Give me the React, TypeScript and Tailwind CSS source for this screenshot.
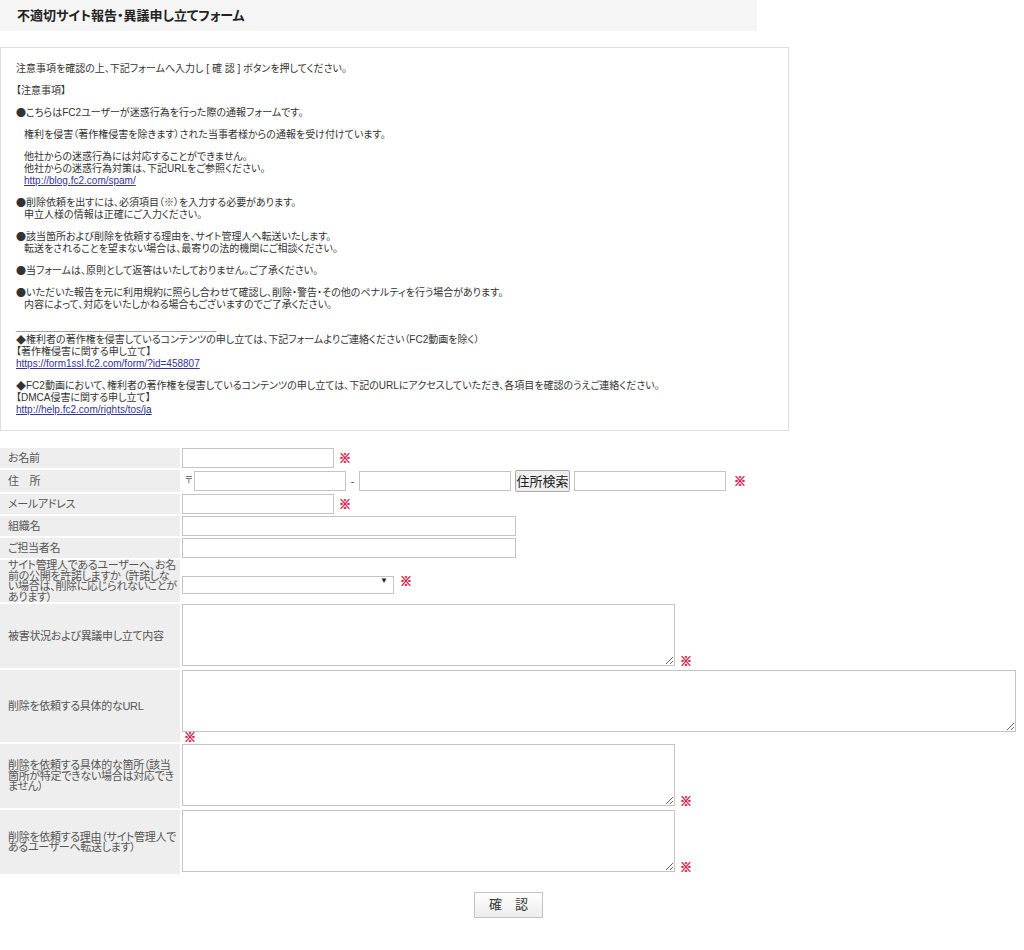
import React from 'react';

const font = "font-['Liberation_Sans','Noto_Sans_CJK_JP',sans-serif] [font-feature-settings:'palt']";
const field = 'h-[20px] border border-[#c4c4c4] bg-white px-1 text-[12px] outline-none';
const area = 'h-[62px] border border-[#c4c4c4] bg-white p-1 text-[12px] outline-none';

function Req({ className = '' }: { className?: string }) {
  return (
    <span
      className={`font-['Noto_Sans_CJK_JP'] text-[12px] font-bold leading-[10px] text-[#d9214f] [-webkit-text-stroke:0.6px_#d9214f] ${className}`}
    >
      ※
    </span>
  );
}

// bullet glyphs come from the CJK face so they keep full width
function Dot({ children = '●' }: { children?: string }) {
  return <span className="inline-block h-[12px] align-top font-['Noto_Sans_CJK_JP'] leading-[12px]">{children}</span>;
}

function Ext({ children }: { children: React.ReactNode }) {
  return (
    <a href="#" className="text-[#33339a] underline">
      {children}
    </a>
  );
}

function Label({ children }: { children: React.ReactNode }) {
  return (
    <div className="flex items-center bg-[#eeeeee] pl-[8px] pr-[1px] text-[11px] leading-[10.5px] tracking-[-0.3px] text-[#555]">
      {children}
    </div>
  );
}

function Notice() {
  return (
    <div className="mt-[16px] w-[789px] space-y-[10px] border border-[#dddddd] px-[15px] pb-[14px] pt-[15px] text-[10px] leading-[12px] text-[#333]">
      <p>注意事項を確認の上、下記フォームへ入力し [ 確 認 ] ボタンを押してください。</p>
      <p>【注意事項】</p>
      <p>
        <Dot />こちらはFC2ユーザーが迷惑行為を行った際の通報フォームです。
      </p>
      <p className="pl-[8px]">権利を侵害（著作権侵害を除きます）された当事者様からの通報を受け付けています。</p>
      <div className="pl-[8px]">
        <p>他社からの迷惑行為には対応することができません。</p>
        <p>他社からの迷惑行為対策は、下記URLをご参照ください。</p>
        <p>
          <Ext>http://blog.fc2.com/spam/</Ext>
        </p>
      </div>
      <div>
        <p>
          <Dot />削除依頼を出すには、必須項目（※）を入力する必要があります。
        </p>
        <p className="pl-[8px]">申立人様の情報は正確にご入力ください。</p>
      </div>
      <div>
        <p>
          <Dot />該当箇所および削除を依頼する理由を、サイト管理人へ転送いたします。
        </p>
        <p className="pl-[8px]">転送をされることを望まない場合は、最寄りの法的機関にご相談ください。</p>
      </div>
      <p>
        <Dot />当フォームは、原則として返答はいたしておりません。ご了承ください。
      </p>
      <div>
        <p>
          <Dot />いただいた報告を元に利用規約に照らし合わせて確認し、削除・警告・その他のペナルティを行う場合があります。
        </p>
        <p className="pl-[8px]">内容によって、対応をいたしかねる場合もございますのでご了承ください。</p>
      </div>
      <div>
        <p className="text-[#888]">____________________________________</p>
        <p className="mt-[1px]">
          <Dot>◆</Dot>権利者の著作権を侵害しているコンテンツの申し立ては、下記フォームよりご連絡ください（FC2動画を除く）
        </p>
        <p>【著作権侵害に関する申し立て】</p>
        <p>
          <Ext>https://form1ssl.fc2.com/form/?id=458807</Ext>
        </p>
      </div>
      <div>
        <p>
          <Dot>◆</Dot>FC2動画において、権利者の著作権を侵害しているコンテンツの申し立ては、下記のURLにアクセスしていただき、各項目を確認のうえご連絡ください。
        </p>
        <p>【DMCA侵害に関する申し立て】</p>
        <p>
          <Ext>http://help.fc2.com/rights/tos/</Ext>
          <a href="#" className="text-[#1d1d7a] underline">ja</a>
        </p>
      </div>
    </div>
  );
}

function ReportForm() {
  return (
    <form className="mt-[17px] w-[1017px]" onSubmit={(e) => e.preventDefault()}>
      <div className="grid grid-cols-[180px_835px] gap-[2px]">
        <Label>お名前</Label>
        <div className="flex items-center">
          <input className={`${field} w-[152px]`} />
          <Req className="ml-[5px]" />
        </div>

        <Label>住　所</Label>
        <div className="flex items-center">
          <span className="w-[12px] pl-[3px] text-[9px] text-[#555]">〒</span>
          <input className={`${field} w-[152px]`} />
          <span className="w-[13px] text-center text-[11px] text-[#555]">-</span>
          <input className={`${field} w-[152px]`} />
          <button
            type="button"
            className="ml-[4px] h-[22px] w-[55px] rounded-[2px] border border-[#a9a9a9] bg-[#efefef] text-[13px] leading-none text-[#222]"
          >
            住所検索
          </button>
          <input className={`${field} ml-[4px] w-[152px]`} />
          <Req className="ml-[8px]" />
        </div>

        <Label>メールアドレス</Label>
        <div className="flex items-center">
          <input className={`${field} w-[152px]`} />
          <Req className="ml-[5px]" />
        </div>

        <Label>組織名</Label>
        <div className="flex items-center">
          <input className={`${field} w-[334px]`} />
        </div>

        <Label>ご担当者名</Label>
        <div className="flex items-center">
          <input className={`${field} w-[334px]`} />
        </div>

        <Label>サイト管理人であるユーザーへ、お名前の公開を許諾しますか （許諾しない場合は、削除に応じられないことがあります）</Label>
        <div className="flex items-center">
          <div className="relative h-[18px] w-[212px]">
            <select className="h-full w-full appearance-none border border-[#c4c4c4] bg-white text-[11px] outline-none">
              <option></option>
              <option>許諾する</option>
              <option>許諾しない</option>
            </select>
            <span className="pointer-events-none absolute right-[6px] top-[3px] text-[8px] text-[#222]">▼</span>
          </div>
          <Req className="ml-[6px]" />
        </div>

        <Label>被害状況および異議申し立て内容</Label>
        <div className="flex items-end pb-[2px]">
          <textarea className={`${area} w-[493px]`} />
          <Req className="ml-[5px]" />
        </div>

        <Label>削除を依頼する具体的なURL</Label>
        <div className="flex flex-col">
          <textarea className={`${area} w-[834px]`} />
          <Req className="pl-[2px]" />
        </div>

        <Label>削除を依頼する具体的な箇所（該当箇所が特定できない場合は対応できません）</Label>
        <div className="flex items-end pb-[2px]">
          <textarea className={`${area} w-[493px]`} />
          <Req className="ml-[5px]" />
        </div>

        <Label>削除を依頼する理由（サイト管理人であるユーザーへ転送します）</Label>
        <div className="flex items-end pb-[2px]">
          <textarea className={`${area} w-[493px]`} />
          <Req className="ml-[5px]" />
        </div>
      </div>

      <button
        type="submit"
        className="mx-auto mt-[18px] flex h-[26px] w-[69px] items-center justify-center border border-[#c2c2c2] bg-linear-to-b from-white to-[#ececec] text-[13px] text-[#333]"
      >
        確　認
      </button>
    </form>
  );
}

export default function App() {
  return (
    <div className={`min-h-[950px] bg-white ${font}`}>
      <div className="flex h-[31px] w-[757px] items-center bg-[#f5f5f5] pl-[17px]">
        <h1 className="text-[13px] font-bold text-[#222]">不適切サイト報告・異議申し立てフォーム</h1>
      </div>
      <Notice />
      <ReportForm />
    </div>
  );
}
